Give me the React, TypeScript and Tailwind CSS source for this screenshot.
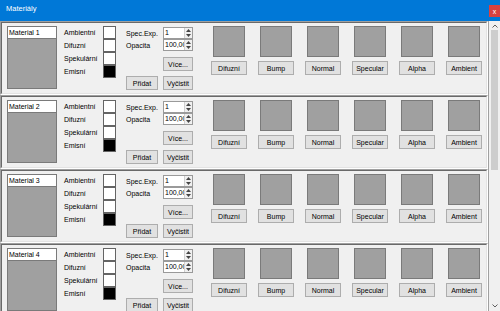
// Materiály — WinForms-style material editor window, four material rows.

const TEXTURES = ['Difuzní', 'Bump', 'Normal', 'Specular', 'Alpha', 'Ambient']
const COLORS = [
  { label: 'Ambientní', fill: 'bg-white' },
  { label: 'Difuzní', fill: 'bg-white' },
  { label: 'Spekulární', fill: 'bg-white' },
  { label: 'Emisní', fill: 'bg-black' },
]

function Btn({ label, w }: { label: string; w: string }) {
  return (
    <div className={`${w} flex h-[14px] shrink-0 items-center justify-center border border-[#adadad] bg-[#e1e1e1] text-[7px] leading-none text-black`}>
      {label}
    </div>
  )
}

function Spinner({ value }: { value: string }) {
  return (
    <div className="flex h-[12px] w-[30px] border border-[#9a9a9a] bg-white">
      <div className="flex-1 overflow-hidden whitespace-nowrap pl-[1px] text-[7px] leading-[10px]">{value}</div>
      <div className="flex w-[8px] flex-col border-l border-[#d0d0d0] bg-[#f0f0f0]">
        <div className="flex flex-1 items-center justify-center">
          <svg width="5" height="3" viewBox="0 0 5 3"><path d="M0 3 L2.5 0 L5 3 Z" fill="#444" /></svg>
        </div>
        <div className="flex flex-1 items-center justify-center">
          <svg width="5" height="3" viewBox="0 0 5 3"><path d="M0 0 L2.5 3 L5 0 Z" fill="#444" /></svg>
        </div>
      </div>
    </div>
  )
}

function MaterialRow({ n }: { n: number }) {
  return (
    <div className="h-[74px] shrink-0 border border-t-[#a0a0a0] border-l-[#a0a0a0] border-b-white border-r-white">
      <div className="flex h-full items-start border border-t-[#696969] border-l-[#696969] border-b-[#e3e3e3] border-r-[#e3e3e3] pl-[5px] pt-[3px]">
        {/* name + preview */}
        <div className="flex w-[50px] flex-col">
          <div className="flex h-[13px] items-center border border-[#7a7a7a] bg-white pl-[1px] text-[7px] leading-none">
            Material {n}
          </div>
          <div className="h-[50px] border border-t-0 border-[#7a7a7a] bg-[#a0a0a0]" />
        </div>

        {/* colour swatches */}
        <div className="ml-[7px] flex flex-col">
          {COLORS.map((c) => (
            <div key={c.label} className="flex h-[13px] items-center">
              <span className="w-[39px] text-[7px] leading-none">{c.label}</span>
              <div className={`h-[13px] w-[13px] border border-[#646464] ${c.fill}`} />
            </div>
          ))}
        </div>

        {/* parameters + buttons */}
        <div className="ml-[10px] flex flex-col">
          <div className="mt-[1px] flex items-center">
            <span className="w-[37px] text-[7px] leading-none">Spec.Exp.</span>
            <Spinner value="1" />
          </div>
          <div className="flex items-center">
            <span className="w-[37px] text-[7px] leading-none">Opacita</span>
            <Spinner value="100,00" />
          </div>
          <div className="mt-[6px] flex justify-end">
            <Btn label="Více..." w="w-[30px]" />
          </div>
          <div className="mt-[5px] flex gap-[5px]">
            <Btn label="Přidat" w="w-[32px]" />
            <Btn label="Vyčistit" w="w-[30px]" />
          </div>
        </div>

        {/* texture slots */}
        <div className="ml-[18px] flex gap-[11px]">
          {TEXTURES.map((t) => (
            <div key={t} className="flex w-[36px] flex-col items-center gap-[4px]">
              <div className="h-[31px] w-[32px] border border-[#7a7a7a] bg-[#a0a0a0]" />
              <Btn label={t} w="w-[36px]" />
            </div>
          ))}
        </div>
      </div>
    </div>
  )
}

export default function App() {
  return (
    <div className="flex h-[311px] w-[500px] flex-col overflow-hidden bg-[#f0f0f0] text-black" style={{ fontFamily: '"Liberation Sans", Arial, sans-serif' }}>
      {/* title bar */}
      <div className="flex h-[21px] shrink-0 items-start justify-between bg-[#0078d7]">
        <span className="pl-[6px] pt-[5px] text-[7.5px] leading-none text-white">Materiály</span>
        <div className="mt-[5px] flex h-[12px] w-[11px] items-center justify-center bg-[#d9413f] text-[7px] leading-none text-white">x</div>
      </div>

      <div className="flex min-h-0 flex-1">
        <div className="flex min-w-0 flex-1 flex-col overflow-hidden">
          {[1, 2, 3, 4].map((n) => (
            <MaterialRow key={n} n={n} />
          ))}
        </div>

        {/* vertical scrollbar */}
        <div className="flex w-[12px] shrink-0 flex-col items-center border-l border-[#a0a0a0] bg-[#f0f0f0]">
          <div className="flex h-[9px] items-center justify-center">
            <svg width="6" height="4" viewBox="0 0 6 4"><path d="M0.5 3.5 L3 1 L5.5 3.5" fill="none" stroke="#606060" strokeWidth="1" /></svg>
          </div>
          <div className="h-[140px] w-[7px] bg-[#cdcdcd]" />
          <div className="flex-1" />
          <div className="flex h-[10px] items-center justify-center">
            <svg width="6" height="4" viewBox="0 0 6 4"><path d="M0.5 0.5 L3 3 L5.5 0.5" fill="none" stroke="#606060" strokeWidth="1" /></svg>
          </div>
        </div>
      </div>
    </div>
  )
}
